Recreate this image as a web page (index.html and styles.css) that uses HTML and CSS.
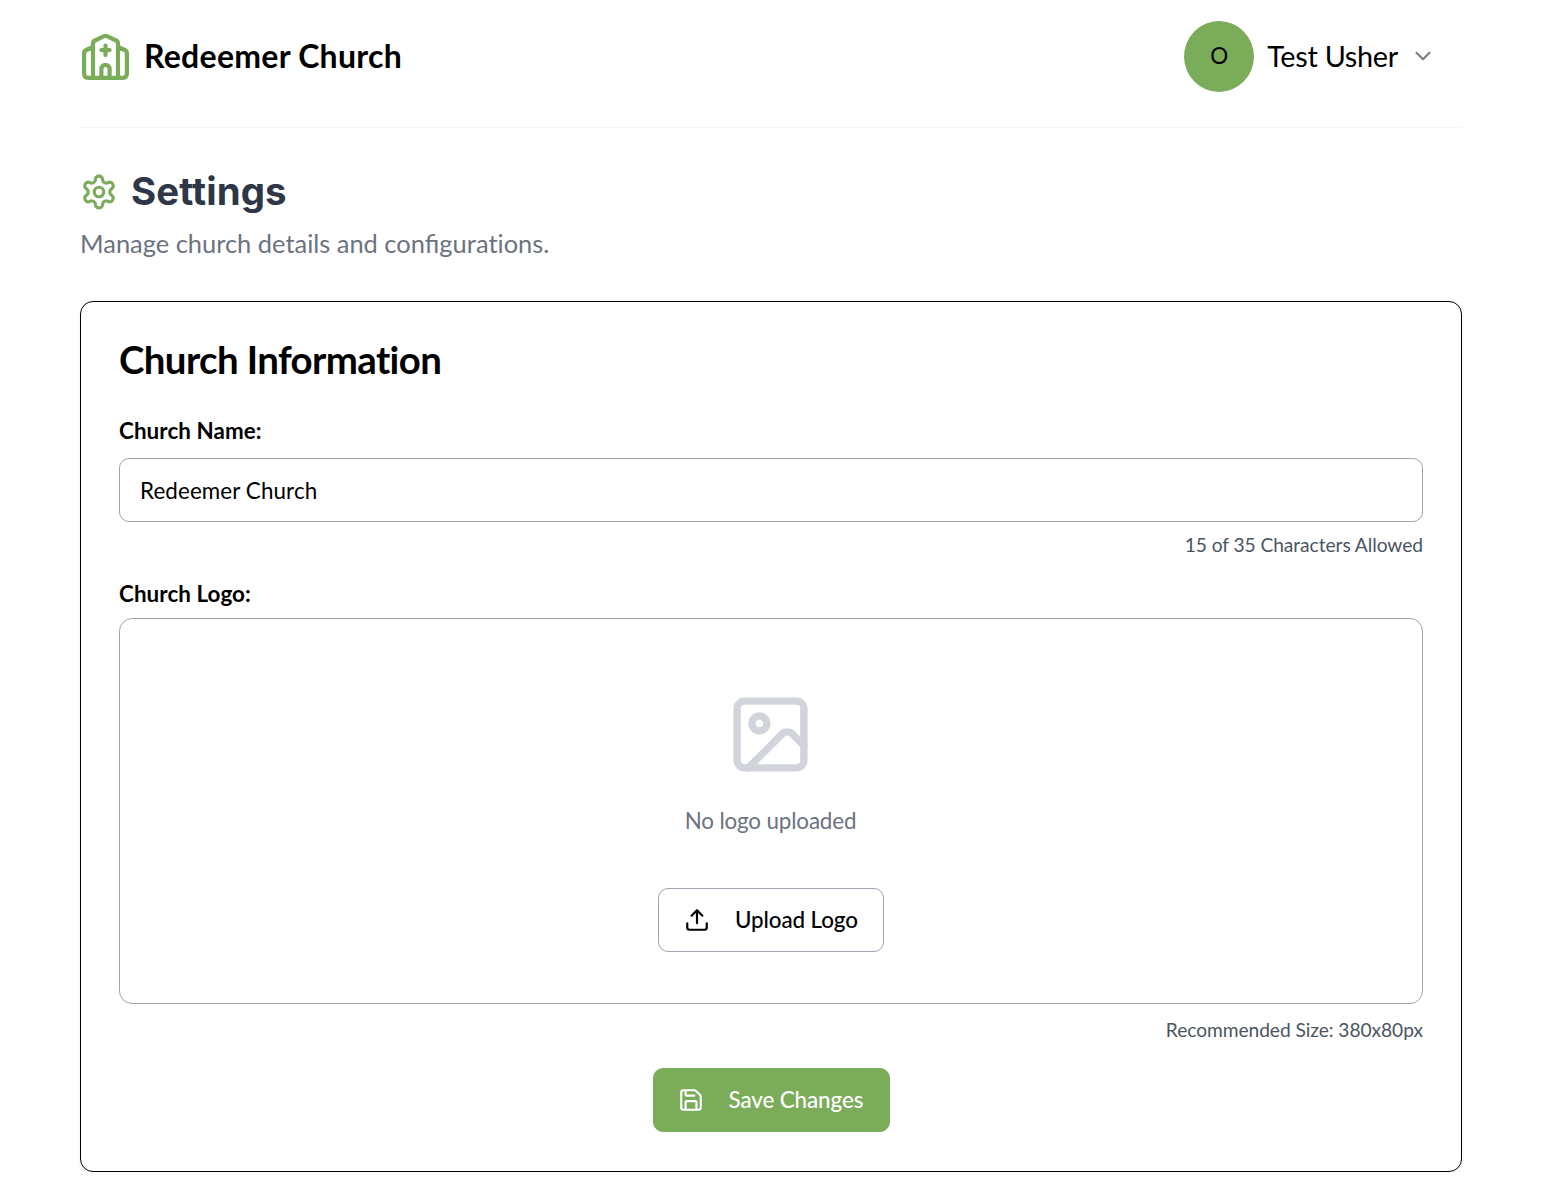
FILE: index.html
```html
<!DOCTYPE html>
<html lang="en">
<head>
<meta charset="utf-8">
<title>Settings</title>
<link rel="stylesheet" href="styles.css">
</head>
<body>
<div class="page">
  <header class="topbar">
    <div class="brand">
      <svg class="brand-icon" viewBox="0 0 51 51" fill="none" stroke="currentColor" stroke-width="4.2" stroke-linecap="round" stroke-linejoin="round">
        <path d="M13 46.800V12.400q0-2 1.900-2.900l9.300-4.300q1.300-.6 2.600 0l9.300 4.300q1.900.9 1.900 2.900v34.400M13 15.800l-6.800 3.200q-2.100 1-2.100 3.200v20.600q0 4 4 4h34.800q4 0 4-4V22.200q0-2.200-2.100-3.200L38 15.800M21.400 46.800v-8.900a4.100 4.100 0 0 1 8.200 0v8.900M25.500 14.700v9.400M21.400 19.100h8.200"/>
      </svg>
      <span class="brand-name">Redeemer Church</span>
    </div>
    <div class="user">
      <span class="avatar">O</span>
      <span class="user-name">Test Usher</span>
      <svg class="chevron" viewBox="0 0 24 24" fill="none" stroke="currentColor" stroke-width="2" stroke-linecap="round" stroke-linejoin="round"><path d="m6 9 6 6 6-6"/></svg>
    </div>
  </header>

  <section class="heading">
    <div class="title-row">
      <svg class="gear" viewBox="0 0 24 24" fill="none" stroke="currentColor" stroke-width="2" stroke-linecap="round" stroke-linejoin="round"><path d="M12.220 2h-.44a2 2 0 0 0-2 2v.18a2 2 0 0 1-1 1.730l-.43.25a2 2 0 0 1-2 0l-.15-.08a2 2 0 0 0-2.730.730l-.22.380a2 2 0 0 0 .730 2.730l.15.1a2 2 0 0 1 1 1.720v.510a2 2 0 0 1-1 1.740l-.15.090a2 2 0 0 0-.730 2.730l.22.380a2 2 0 0 0 2.730.730l.15-.08a2 2 0 0 1 2 0l.43.25a2 2 0 0 1 1 1.730V20a2 2 0 0 0 2 2h.44a2 2 0 0 0 2-2v-.18a2 2 0 0 1 1-1.730l.43-.25a2 2 0 0 1 2 0l.15.080a2 2 0 0 0 2.730-.730l.22-.39a2 2 0 0 0-.730-2.730l-.15-.08a2 2 0 0 1-1-1.740v-.5a2 2 0 0 1 1-1.740l.15-.09a2 2 0 0 0 .730-2.730l-.22-.38a2 2 0 0 0-2.730-.73l-.15.080a2 2 0 0 1-2 0l-.43-.25a2 2 0 0 1-1-1.730V4a2 2 0 0 0-2-2z"/><circle cx="12" cy="12" r="3"/></svg>
      <h1>Settings</h1>
    </div>
    <p class="subtitle">Manage church details and configur<span class="no-liga">ations.</span></p>
  </section>

  <main class="card">
    <h2>Church Information</h2>
    <label class="label" for="name">Church Name:</label>
    <input class="input" id="name" type="text" value="Redeemer Church">
    <p class="hint hint-name">15 of 35 Characters Allowed</p>
    <span class="label">Church Logo:</span>
    <div class="dropzone">
      <svg class="image-icon" viewBox="0 0 24 24" fill="none" stroke="currentColor" stroke-width="2" stroke-linecap="round" stroke-linejoin="round"><rect x="3" y="3" width="18" height="18" rx="2"/><circle cx="9" cy="9" r="2"/><path d="m21 15-3.086-3.086a2 2 0 0 0-2.828 0L6 21"/></svg>
      <p class="empty">No logo uploaded</p>
      <button class="btn upload" type="button">
        <svg viewBox="0 0 24 24" fill="none" stroke="currentColor" stroke-width="2" stroke-linecap="round" stroke-linejoin="round"><path d="M21 15v4a2 2 0 0 1-2 2H5a2 2 0 0 1-2-2v-4M17 8l-5-5-5 5M12 3v12"/></svg>
        <span>Upload Logo</span>
      </button>
    </div>
    <p class="hint hint-logo">Recommended Size: 380x80px</p>
    <button class="btn save" type="button">
      <svg viewBox="0 0 24 24" fill="none" stroke="currentColor" stroke-width="2" stroke-linecap="round" stroke-linejoin="round"><path d="M15.200 3a2 2 0 0 1 1.400.6l3.800 3.800a2 2 0 0 1 .6 1.400V19a2 2 0 0 1-2 2H5a2 2 0 0 1-2-2V5a2 2 0 0 1 2-2zM17 21v-7a1 1 0 0 0-1-1H8a1 1 0 0 0-1 1v7M7 3v4a1 1 0 0 0 1 1h7"/></svg>
      <span>Save Changes</span>
    </button>
  </main>
</div>
</body>
</html>
```

FILE: styles.css
```css
* { box-sizing: border-box; }
body {
  margin: 0;
  background: #fff;
  color: #000;
  font-family: Lato, sans-serif;
  overflow: hidden;
}
h1, h2, p { margin: 0; }
svg { display: block; flex: none; }
.page { width: 1382px; margin-left: 80px; }
.topbar {
  height: 128px;
  padding: 0 25px 14px 0;
  border-bottom: 1px solid #f3f4f6;
  display: flex;
  align-items: center;
  justify-content: space-between;
}
.brand { display: flex; align-items: center; gap: 13px; }
.brand-icon { width: 51px; height: 51px; color: #7bac5a; }
.brand-name {
  padding-bottom: 2px;
  font-size: 32px;
  font-weight: 700;
  line-height: 45px;
  letter-spacing: 0.26px;
}
.user { display: flex; align-items: center; }
.avatar {
  width: 70px;
  height: 71px;
  padding-bottom: 3px;
  border-radius: 50%;
  background: #7bac5a;
  display: flex;
  align-items: center;
  justify-content: center;
  font-size: 22.4px;
}
.user-name {
  margin-left: 13px;
  padding-bottom: 2px;
  font-size: 28.8px;
  letter-spacing: -0.27px;
}
.chevron { width: 26px; height: 26px; margin: 0 1px 1px 12px; color: #808080; }
.heading { padding-top: 38px; }
.title-row { display: flex; align-items: center; gap: 13px; height: 52px; }
.gear { width: 38px; height: 38px; color: #7bac5a; }
h1 {
  padding-bottom: 2px;
  font: 700 38.4px/50px Inter, sans-serif;
  letter-spacing: 0.1px;
  color: #2d3748;
}
.subtitle { margin-top: 6px; font-size: 25.45px; line-height: 38px; color: #6b7280; }
.no-liga { font-variant-ligatures: none; }
.card {
  height: 871px;
  margin-top: 39px;
  padding: 37px 38px;
  border: 1px solid #000;
  border-radius: 13px;
  box-shadow: 0 2px 4px rgba(0, 0, 0, 0.05);
  display: flex;
  flex-direction: column;
}
h2 { font-size: 38.4px; line-height: 40px; font-weight: 700; letter-spacing: -0.6px; }
.label { font-size: 22.4px; font-weight: 700; line-height: 32px; letter-spacing: 0.07px; }
h2 + .label { margin-top: 36px; }
.input {
  height: 64px;
  margin-top: 11px;
  padding: 0 20px;
  border: 1px solid #9ca3af;
  border-radius: 10px;
  background: #fff;
  font: 22.4px Lato, sans-serif;
  letter-spacing: 0.1px;
  color: #000;
}
.hint {
  font-size: 19.2px;
  line-height: 26px;
  letter-spacing: -0.06px;
  color: #4b5563;
  text-align: right;
}
.hint-name { margin: 10px 0 20px; }
.dropzone {
  height: 386px;
  margin-top: 8px;
  border: 1px solid #9ca3af;
  border-radius: 13px;
  display: flex;
  flex-direction: column;
  align-items: center;
  padding-top: 71px;
}
.image-icon { width: 89px; height: 89px; margin-right: 1px; color: #d1d5db; }
.empty {
  margin-top: 26px;
  padding-right: 1px;
  font-size: 22.4px;
  line-height: 32px;
  letter-spacing: -0.15px;
  color: #6b7280;
}
.btn {
  height: 64px;
  padding: 0 25px;
  border: 1px solid #9ca3af;
  border-radius: 10px;
  background: #fff;
  color: #000;
  display: flex;
  align-items: center;
  gap: 25px;
  font: 500 22.4px Lato, sans-serif;
  letter-spacing: -0.1px;
  white-space: nowrap;
}
.btn svg { width: 26px; height: 26px; }
.btn span { padding-bottom: 2px; }
.upload { width: 226px; margin-top: 51px; justify-content: flex-start; }
.hint-logo { margin-top: 13px; }
.save {
  width: 237px;
  margin-top: 25px;
  padding: 0 25px 0 24px;
  align-self: center;
  justify-content: flex-start;
  border-color: #7bac5a;
  background: #7bac5a;
  color: #fff;
}
```
